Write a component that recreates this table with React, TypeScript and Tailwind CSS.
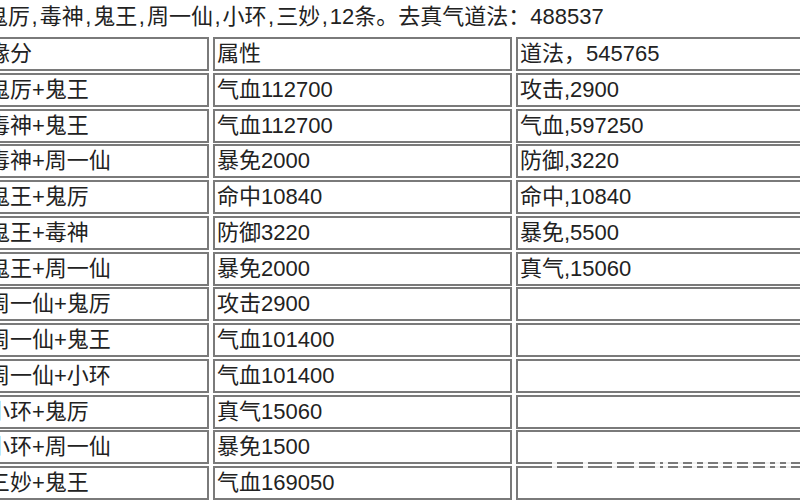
import React from "react";

const rows: [string, string, string][] = [
  ["缘分", "属性", "道法，545765"],
  ["鬼厉+鬼王", "气血112700", "攻击,2900"],
  ["毒神+鬼王", "气血112700", "气血,597250"],
  ["毒神+周一仙", "暴免2000", "防御,3220"],
  ["鬼王+鬼厉", "命中10840", "命中,10840"],
  ["鬼王+毒神", "防御3220", "暴免,5500"],
  ["鬼王+周一仙", "暴免2000", "真气,15060"],
  ["周一仙+鬼厉", "攻击2900", ""],
  ["周一仙+鬼王", "气血101400", ""],
  ["周一仙+小环", "气血101400", ""],
  ["小环+鬼厉", "真气15060", ""],
  ["小环+周一仙", "暴免1500", ""],
  ["三妙+鬼王", "气血169050", ""],
];

const titleParts = ["鬼厉", "毒神", "鬼王", "周一仙", "小环", "三妙"];

const wmGaps = [552, 583, 612, 634, 655, 663, 678, 692, 703, 718, 732, 748, 765, 775, 786];

function Cell({ children }: { children?: React.ReactNode }) {
  return (
    <div className="h-[34px] border-2 border-[#7a7a7a] pl-[2px] flex items-center whitespace-nowrap overflow-hidden">
      {children}
    </div>
  );
}

export default function App() {
  return (
    <div
      className="relative w-[800px] h-[500px] overflow-hidden bg-white text-[#222] text-[22px] leading-none"
      style={{ fontFamily: '"Liberation Sans", "Noto Sans CJK SC", sans-serif' }}
    >
      <div className="ml-[-14px]">
        <div className="h-[35px] flex items-center pb-[2px] whitespace-nowrap">
          {titleParts.map((p) => (
            <React.Fragment key={p}>
              {p}
              <span className="ml-[1.5px] mr-[2px]">,</span>
            </React.Fragment>
          ))}
          12条。去真气道法：488537
        </div>
        <div className="ml-[-2px] pt-[2px] grid grid-cols-[225px_299px_320px] gap-x-[4px] gap-y-[1.75px]">
          {rows.map((r, i) => (
            <React.Fragment key={i}>
              <Cell>{r[0]}</Cell>
              <Cell>{r[1]}</Cell>
              <Cell>{r[2]}</Cell>
            </React.Fragment>
          ))}
        </div>
      </div>
      {wmGaps.map((x) => (
        <div
          key={x}
          className="absolute top-[458px] h-[14px] w-[5px] bg-white opacity-90"
          style={{ left: x }}
        />
      ))}
    </div>
  );
}
